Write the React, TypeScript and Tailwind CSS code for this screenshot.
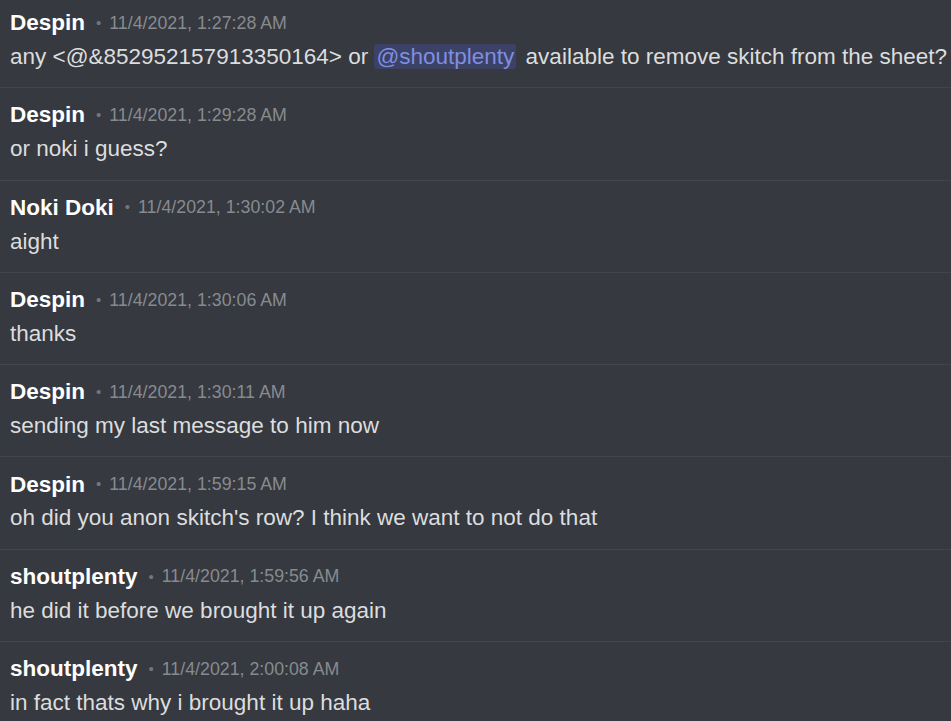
import type { ReactNode } from 'react';

type Msg = { author: string; time: string; body: ReactNode };

const messages: Msg[] = [
  {
    author: 'Despin',
    time: '11/4/2021, 1:27:28 AM',
    body: (
      <>
        any &lt;@&amp;852952157913350164&gt; or{' '}
        <span className="rounded-[3px] bg-[#3c4166] px-[2px] text-[#7f8fe0]">@shoutplenty</span>
        <span className="ml-[3px]"> available to remove skitch from the sheet?</span>
      </>
    ),
  },
  { author: 'Despin', time: '11/4/2021, 1:29:28 AM', body: 'or noki i guess?' },
  { author: 'Noki Doki', time: '11/4/2021, 1:30:02 AM', body: 'aight' },
  { author: 'Despin', time: '11/4/2021, 1:30:06 AM', body: 'thanks' },
  { author: 'Despin', time: '11/4/2021, 1:30:11 AM', body: 'sending my last message to him now' },
  { author: 'Despin', time: '11/4/2021, 1:59:15 AM', body: "oh did you anon skitch's row? I think we want to not do that" },
  { author: 'shoutplenty', time: '11/4/2021, 1:59:56 AM', body: 'he did it before we brought it up again' },
  { author: 'shoutplenty', time: '11/4/2021, 2:00:08 AM', body: 'in fact thats why i brought it up haha' },
];

export default function App() {
  return (
    <div
      className="min-h-screen w-full overflow-hidden bg-[#36393f]"
      style={{ fontFamily: '"Liberation Sans", Arial, sans-serif' }}
    >
      <div className="-mt-[4px]">
        {messages.map((m, i) => (
          <div key={i} className="border-b border-[#42454b] px-[10px] pt-[12px] pb-[13.3px]">
            <div className="flex items-center h-[30px] whitespace-nowrap">
              <span className="text-[22.5px] font-bold text-white">{m.author}</span>
              <span className="ml-[11px] text-[15px] text-[#72767d]">•</span>
              <span className="ml-[8px] text-[17.8px] text-[#878b90]">{m.time}</span>
            </div>
            <div className="mt-[2px] h-[34px] leading-[34px] text-[22.5px] text-[#dcddde] whitespace-nowrap">
              {m.body}
            </div>
          </div>
        ))}
      </div>
    </div>
  );
}
